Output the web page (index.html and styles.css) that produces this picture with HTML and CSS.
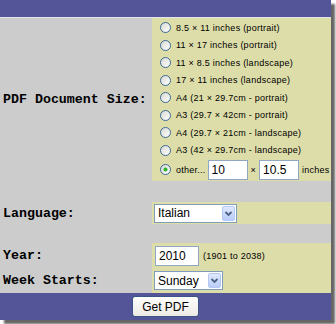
FILE: index.html
```html
<html>
<head>
  <title>PDF Calendar</title>
  <link rel="stylesheet" href="styles.css">
</head>
<body>
  <div class="frame">
    <div class="topbar"></div>

    <div class="row row-size">
      <div class="label">PDF Document Size:</div>
      <div class="field sizes">
        <label class="opt"><input type="radio" name="size"> 8.5 × 11 inches (portrait)</label>
        <label class="opt"><input type="radio" name="size"> 11 × 17 inches (portrait)</label>
        <label class="opt"><input type="radio" name="size"> 11 × 8.5 inches (landscape)</label>
        <label class="opt"><input type="radio" name="size"> 17 × 11 inches (landscape)</label>
        <label class="opt"><input type="radio" name="size"> A4 (21 × 29.7cm - portrait)</label>
        <label class="opt"><input type="radio" name="size"> A3 (29.7 × 42cm - portrait)</label>
        <label class="opt"><input type="radio" name="size"> A4 (29.7 × 21cm - landscape)</label>
        <label class="opt"><input type="radio" name="size"> A3 (42 × 29.7cm - landscape)</label>
        <div class="opt other">
          <input type="radio" name="size" checked>
          <span>other...</span>
          <input type="text" class="num" value="10">
          <span class="times">×</span>
          <input type="text" class="num" value="10.5">
          <span>inches</span>
        </div>
      </div>
    </div>

    <div class="row row-lang">
      <div class="label">Language:</div>
      <div class="field">
        <div class="combo combo-lang">
          <select>
            <option>English</option>
            <option>French</option>
            <option>German</option>
            <option selected>Italian</option>
            <option>Spanish</option>
          </select>
          <span class="drop"><svg width="9" height="7" viewBox="0 0 9 7"><path d="M1.5 2 L4.5 5 L7.5 2" fill="none" stroke="#4d6185" stroke-width="1.8"/></svg></span>
        </div>
      </div>
    </div>

    <div class="row row-year">
      <div class="label">Year:</div>
      <div class="field">
        <input type="text" class="year" value="2010">
        <span class="hint">(1901 to 2038)</span>
      </div>
    </div>

    <div class="row row-week">
      <div class="label">Week Starts:</div>
      <div class="field">
        <div class="combo combo-week">
          <select>
            <option selected>Sunday</option>
            <option>Monday</option>
          </select>
          <span class="drop"><svg width="9" height="7" viewBox="0 0 9 7"><path d="M1.5 2 L4.5 5 L7.5 2" fill="none" stroke="#4d6185" stroke-width="1.8"/></svg></span>
        </div>
      </div>
    </div>

    <div class="footer">
      <button>Get PDF</button>
    </div>
  </div>
</body>
</html>
```

FILE: styles.css
```css
body {
  margin: 0;
  background-color: #fff;
  font-family: "Liberation Sans", Arial, sans-serif;
}

.frame {
  width: 331px;
  background-color: #cccccc;
  box-shadow: 4px 4px 2px rgba(0, 0, 0, 0.6);
}

.topbar {
  height: 17px;
  background-color: #545499;
  border-bottom: 1px solid #e4e4ec;
}

.row {
  display: flex;
}

.label {
  width: 152px;
  padding-left: 3px;
  box-sizing: border-box;
  display: flex;
  align-items: center;
  font-family: "Liberation Mono", "Courier New", monospace;
  font-weight: bold;
  font-size: 13.3px;
  color: #000;
}

.field {
  flex: 1;
  display: flex;
  align-items: center;
  padding-left: 2px;
  background-color: #dddda9;
}

/* paper sizes */
.sizes {
  flex-direction: column;
  align-items: stretch;
  padding: 1px 0 1px 8px;
}

.opt {
  height: 17.5px;
  display: flex;
  align-items: center;
  gap: 5px;
  font-size: 9px;
  letter-spacing: 0.25px;
  color: #000;
}

.opt input[type=radio] {
  appearance: none;
  width: 11px;
  height: 11px;
  margin: 0;
  border: 1px solid #3d6a96;
  border-radius: 50%;
  background: linear-gradient(135deg, #d8d8d2, #fff);
}

.opt input[type=radio]:checked {
  background: radial-gradient(circle, #2db52d 0, #2db52d 1.6px, transparent 2.4px),
              linear-gradient(135deg, #d8d8d2, #fff);
}

.other {
  height: 21px;
  gap: 0;
}

.other span {
  margin-left: 5px;
}

.other .num {
  width: 40px;
  margin-left: 2px;
}

.other .times {
  margin-left: 3px;
  margin-right: 1px;
}

.other span:last-child {
  margin-left: 3px;
}

input[type=text] {
  height: 20px;
  box-sizing: border-box;
  border: 1px solid #8fa7c2;
  padding: 0 3px;
  font-family: "Liberation Sans", Arial, sans-serif;
  font-size: 12px;
  letter-spacing: 0;
  color: #000;
}

/* language, year, week */
.row-lang {
  margin-top: 21px;
  height: 22px;
}

.row-year {
  margin-top: 19px;
  height: 25px;
}

.row-week {
  height: 25px;
}

.combo {
  height: 19px;
  box-sizing: border-box;
  display: flex;
  align-items: center;
  border: 1px solid #7f9db9;
  background-color: #fff;
}

.combo-lang {
  width: 83px;
}

.combo-week {
  width: 69px;
}

.combo select {
  appearance: none;
  flex: 1;
  min-width: 0;
  border: none;
  background: transparent;
  padding: 0 0 0 3px;
  font-family: "Liberation Sans", Arial, sans-serif;
  font-size: 12px;
  color: #000;
  outline: none;
}

.drop {
  width: 13px;
  height: 15px;
  margin-right: 1px;
  box-sizing: border-box;
  display: flex;
  align-items: center;
  justify-content: center;
  border: 1px solid #b4c8f4;
  border-radius: 2px;
  background: linear-gradient(#dfe8fe, #b9cdf8);
}

.year {
  width: 44px;
  margin-left: 1px;
}

.hint {
  margin-left: 4px;
  font-size: 9px;
  letter-spacing: 0.25px;
  color: #000;
}

.footer {
  height: 27px;
  display: flex;
  align-items: center;
  justify-content: center;
  background-color: #545499;
}

button {
  width: 67px;
  height: 21px;
  padding: 0;
  border: 1px solid #3a5488;
  border-radius: 3px;
  background: linear-gradient(#fefefe, #ecebe4);
  font-family: "Liberation Sans", Arial, sans-serif;
  font-size: 12px;
  color: #000;
  cursor: pointer;
}
```
